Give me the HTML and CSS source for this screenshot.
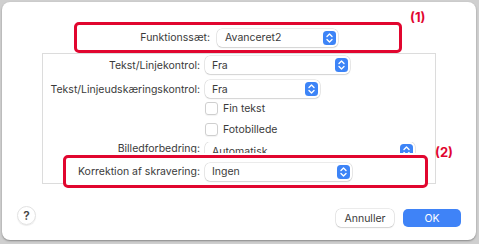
FILE: index.html
```html
<!DOCTYPE html>
<html lang="da">
<head>
    <meta charset="UTF-8">
    <meta name="viewport" content="width=device-width, initial-scale=1.0">
    <title>Funktionssæt</title>
    <link rel="stylesheet" href="styles.css">
</head>
<body>
    <div class="window">
        <div class="head">
            <div class="mark mark-top">
                <span class="label label-top">Funktionssæt:</span>
                <div class="select sel-top">
                    <span>Avanceret2</span>
                    <svg class="step" viewBox="0 0 13 14"><rect width="13" height="14" rx="3.5"/><path d="M4 5.5 6.5 3 9 5.5M4 8.5 6.5 11 9 8.5"/></svg>
                </div>
            </div>
            <span class="note note-1">(1)</span>
        </div>

        <div class="group-wrap">
            <div class="group">
                <div class="row">
                    <span class="label">Tekst/Linjekontrol:</span>
                    <div class="select sel-1">
                        <span>Fra</span>
                        <svg class="step" viewBox="0 0 13 14"><rect width="13" height="14" rx="3.5"/><path d="M4 5.5 6.5 3 9 5.5M4 8.5 6.5 11 9 8.5"/></svg>
                    </div>
                </div>
                <div class="row row-2">
                    <span class="label">Tekst/Linjeudskæringskontrol:</span>
                    <div class="select sel-2">
                        <span>Fra</span>
                        <svg class="step" viewBox="0 0 13 14"><rect width="13" height="14" rx="3.5"/><path d="M4 5.5 6.5 3 9 5.5M4 8.5 6.5 11 9 8.5"/></svg>
                    </div>
                </div>
                <div class="check-row"><span class="box"></span>Fin tekst</div>
                <div class="check-row"><span class="box"></span>Fotobillede</div>
                <div class="row row-cut">
                    <span class="label">Billedforbedring:</span>
                    <div class="select sel-3">
                        <span>Automatisk</span>
                        <svg class="step" viewBox="0 0 13 14"><rect width="13" height="14" rx="3.5"/><path d="M4 5.5 6.5 3 9 5.5M4 8.5 6.5 11 9 8.5"/></svg>
                    </div>
                </div>
                <div class="mark mark-low">
                    <span class="label label-low">Korrektion af skravering:</span>
                    <div class="select sel-4">
                        <span>Ingen</span>
                        <svg class="step" viewBox="0 0 13 14"><rect width="13" height="14" rx="3.5"/><path d="M4 5.5 6.5 3 9 5.5M4 8.5 6.5 11 9 8.5"/></svg>
                    </div>
                </div>
            </div>
            <span class="note note-2">(2)</span>
        </div>

        <div class="footer">
            <span class="help">?</span>
            <div class="buttons">
                <button class="btn">Annuller</button>
                <button class="btn btn-ok">OK</button>
            </div>
        </div>
    </div>
</body>
</html>
```

FILE: styles.css
```css
body {
    margin: 0;
    width: 479px;
    height: 244px;
    background-color: #cfcfcf;
    font-family: Inter, "Liberation Sans", sans-serif;
    font-size: 10.5px;
    color: #3a3a3a;
    overflow: hidden;
}

.window {
    margin: 2px 0 0 2px;
    width: 474px;
    height: 238px;
    background-color: #fff;
    border-radius: 8px;
    box-shadow: 0 1px 2px rgba(0, 0, 0, 0.35);
    display: flex;
    flex-direction: column;
}

.head {
    display: flex;
    align-items: flex-start;
    margin-top: 20px;
    padding-left: 72px;
}

.mark {
    display: flex;
    align-items: center;
    box-sizing: border-box;
    border: 3px solid #e1062f;
    border-radius: 5px;
    background-color: #fff;
}

.mark-top {
    width: 328px;
    height: 31px;
}

.note {
    color: #e1062f;
    font-weight: bold;
    font-size: 13px;
}

.note-1 {
    margin: -13px 0 0 8px;
}

.label {
    width: 157px;
    text-align: right;
    margin-right: 5px;
    white-space: nowrap;
}

.label-top {
    width: 133px;
    margin-right: 7px;
}

.label-low {
    width: 134px;
}

.select {
    box-sizing: border-box;
    height: 18px;
    display: flex;
    align-items: center;
    justify-content: space-between;
    padding: 0 2px 0 7px;
    background-color: #fff;
    border-radius: 5px;
    box-shadow: 0 0 0 0.5px rgba(0, 0, 0, 0.16), 0 1px 1.5px rgba(0, 0, 0, 0.1);
}

.sel-top { width: 121px; padding-left: 8px; }
.sel-1 { width: 145px; }
.sel-2 { width: 115px; }
.sel-3 { width: 210px; }
.sel-4 { width: 147px; }

.step {
    width: 13px;
    height: 14px;
    flex: none;
}

.step rect {
    fill: #3d84f7;
}

.step path {
    fill: none;
    stroke: #fff;
    stroke-width: 1.4;
    stroke-linecap: round;
    stroke-linejoin: round;
}

.group-wrap {
    display: flex;
    align-items: flex-start;
    margin-left: 40px;
}

.group {
    width: 394px;
    box-sizing: border-box;
    border: 1px solid #dcdcdc;
    display: flex;
    flex-direction: column;
    padding-top: 2px;
}

.row {
    display: flex;
    align-items: center;
    height: 18px;
}

.row-2 {
    margin-top: 6px;
}

.row-cut {
    margin-top: 2px;
    height: 11px;
    overflow: hidden;
    align-items: flex-start;
}

.check-row {
    display: flex;
    align-items: center;
    height: 21px;
    padding-left: 162px;
}

.check-row:first-of-type {
    margin-top: 2px;
}

.box {
    width: 11px;
    height: 11px;
    border: 1px solid #cfcfcf;
    border-radius: 3px;
    margin-right: 5px;
    box-shadow: 0 1px 1px rgba(0, 0, 0, 0.05);
}

.mark-low {
    margin: 2px 0 -5px 20px;
    width: 365px;
    height: 33px;
}

.note-2 {
    margin: 91px 0 0 -1px;
}

.footer {
    margin-top: auto;
    display: flex;
    justify-content: space-between;
    align-items: flex-end;
    padding: 0 15px 13px 15px;
}

.help {
    width: 19px;
    height: 19px;
    margin-bottom: 2px;
    border-radius: 50%;
    box-sizing: border-box;
    border: 1px solid #e2e2e2;
    box-shadow: 0 1px 1px rgba(0, 0, 0, 0.08);
    display: flex;
    align-items: center;
    justify-content: center;
    font-size: 12px;
    font-weight: 600;
    color: #444;
}

.buttons {
    display: flex;
    gap: 9px;
}

.btn {
    width: 58px;
    height: 18px;
    padding: 0;
    font-family: inherit;
    font-size: 10.5px;
    color: #3a3a3a;
    background-color: #fff;
    border: none;
    border-radius: 5px;
    box-shadow: 0 0 0 0.5px rgba(0, 0, 0, 0.16), 0 1px 1.5px rgba(0, 0, 0, 0.1);
}

.btn-ok {
    color: #fff;
    background-color: #3f83f7;
    box-shadow: none;
}
```
